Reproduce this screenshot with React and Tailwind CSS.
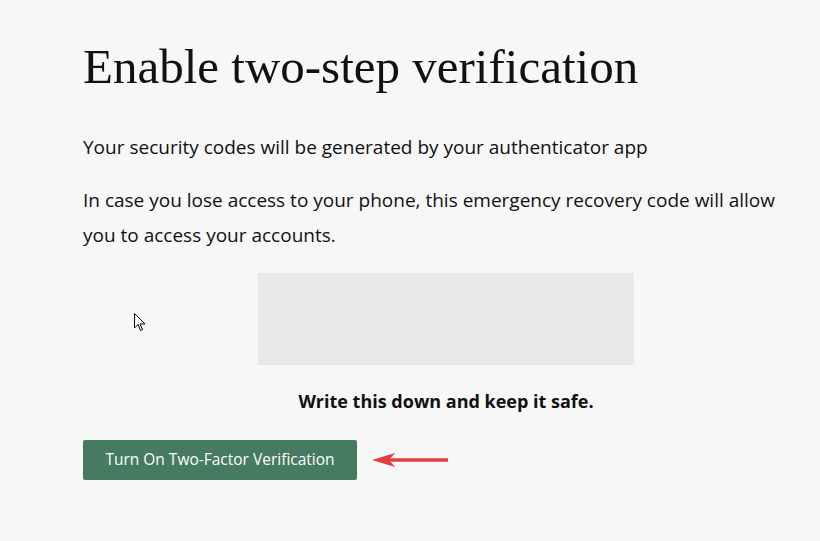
export default function App() {
  return (
    <div className="relative min-h-[541px] w-[820px] overflow-hidden bg-[#f7f7f7] text-[#111]">
      <div className="ml-[83px] w-[726px] pt-[37px]">
        <h1
          className="text-[49px] leading-[60px] text-[#111]"
          style={{ fontFamily: '"Liberation Serif", serif' }}
        >
          Enable two-step verification
        </h1>
        <div style={{ fontFamily: '"Open Sans", "Liberation Sans", sans-serif' }}>
          <p className="mt-[33px] text-[19px] leading-[35px]">
            Your security codes will be generated by your authenticator app
          </p>
          <p className="mt-[18px] w-[705px] text-[19px] leading-[35px]">
            In case you lose access to your phone, this emergency recovery code will allow you to
            access your accounts.
          </p>
          <div className="mx-auto mt-[20px] h-[92px] w-[376px] bg-[#e8e8e8]" />
          <p className="mt-[23px] text-center text-[18px] font-bold leading-[26px]">
            Write this down and keep it safe.
          </p>
          <div className="mt-[26px] flex items-center gap-[14px]">
            <button className="h-[40px] w-[274px] rounded-[2px] bg-[#467a61] text-[15.5px] text-white">
              Turn On Two-Factor Verification
            </button>
            <svg width="78" height="18" viewBox="0 0 78 18">
              <path d="M8 9 H77" stroke="#e53e3e" strokeWidth="3.5" />
              <path d="M1 9 L24 2 L18 9 L24 16 Z" fill="#e53e3e" />
            </svg>
          </div>
        </div>
      </div>
      <svg className="absolute left-[134px] top-[313px]" width="12" height="19" viewBox="0 0 12 19">
        <path d="M0.5 0.5 V15 L4 11.5 L6.5 17.5 L8.5 16.5 L6 11 H11 Z" fill="#fff" stroke="#000" strokeWidth="1" />
      </svg>
    </div>
  );
}
